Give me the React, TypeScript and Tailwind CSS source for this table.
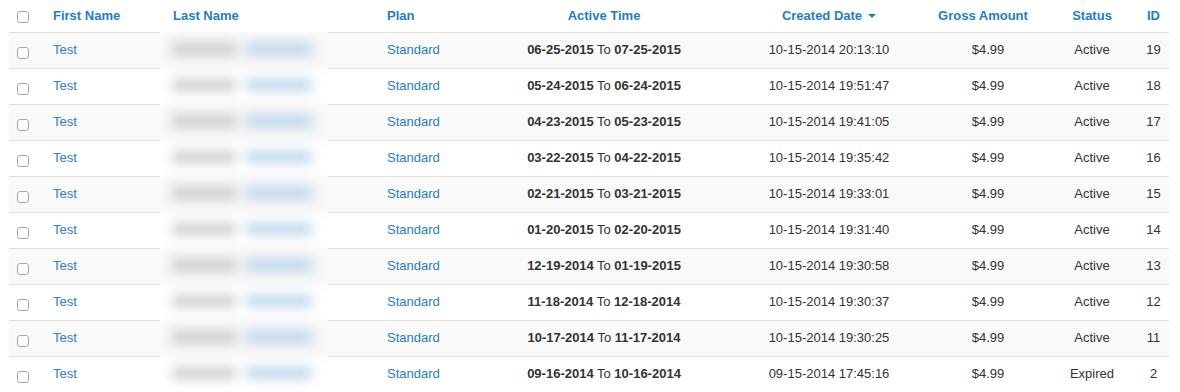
import React from 'react';

type Row = { from: string; to: string; created: string; status: string; id: number };

const rows: Row[] = [
  { from: '06-25-2015', to: '07-25-2015', created: '10-15-2014 20:13:10', status: 'Active', id: 19 },
  { from: '05-24-2015', to: '06-24-2015', created: '10-15-2014 19:51:47', status: 'Active', id: 18 },
  { from: '04-23-2015', to: '05-23-2015', created: '10-15-2014 19:41:05', status: 'Active', id: 17 },
  { from: '03-22-2015', to: '04-22-2015', created: '10-15-2014 19:35:42', status: 'Active', id: 16 },
  { from: '02-21-2015', to: '03-21-2015', created: '10-15-2014 19:33:01', status: 'Active', id: 15 },
  { from: '01-20-2015', to: '02-20-2015', created: '10-15-2014 19:31:40', status: 'Active', id: 14 },
  { from: '12-19-2014', to: '01-19-2015', created: '10-15-2014 19:30:58', status: 'Active', id: 13 },
  { from: '11-18-2014', to: '12-18-2014', created: '10-15-2014 19:30:37', status: 'Active', id: 12 },
  { from: '10-17-2014', to: '11-17-2014', created: '10-15-2014 19:30:25', status: 'Active', id: 11 },
  { from: '09-16-2014', to: '10-16-2014', created: '09-15-2014 17:45:16', status: 'Expired', id: 2 },
];

function Checkbox({ header }: { header?: boolean }) {
  return (
    <span
      className={
        'block w-[12px] h-[12px] rounded-[3px] border border-[#a8a8a8] bg-white ' +
        (header ? 'mt-[2px]' : 'mt-[6px]')
      }
    />
  );
}

export default function App() {
  return (
    <div
      className="w-[1180px] h-[392px] bg-white overflow-hidden text-[13px] text-[#333]"
      style={{ fontFamily: '"Liberation Sans", Arial, sans-serif' }}
    >
      <div className="relative ml-[9px] w-[1160px]">
        {/* header */}
        <div className="flex h-[32px] items-center font-bold text-[#1f7dc6]">
          <div className="w-[32px] pl-[8px]"><Checkbox header /></div>
          <div className="w-[124px] pl-[12px]">First Name</div>
          <div className="w-[214px] pl-[8px]">Last Name</div>
          <div className="w-[145px] pl-[8px]">Plan</div>
          <div className="w-[160px] text-center">Active Time</div>
          <div className="w-[250px] pl-[40px] flex justify-center">
            <span className="flex items-center gap-[6px]">
              Created Date
              <span className="inline-block w-0 h-0 border-x-[4px] border-x-transparent border-t-[4px] border-t-[#1f7dc6] mt-[-1px]" />
            </span>
          </div>
          <div className="w-[126px] pr-[28px] text-center">Gross Amount</div>
          <div className="w-[64px] text-center">Status</div>
          <div className="w-[45px] pl-[14px] text-center">ID</div>
        </div>

        {/* body */}
        {rows.map((r, i) => (
          <div
            key={r.id}
            className={
              'flex h-[36px] items-center pb-[2px] border-t border-[#dddddd] ' +
              (i % 2 === 0 && i < 9 ? 'bg-[#f9f9f9]' : 'bg-white')
            }
          >
            <div className="w-[32px] pl-[8px]"><Checkbox /></div>
            <div className="w-[124px] pl-[12px] text-[#2a7ec6]">Test</div>
            <div className="w-[214px] pl-[8px]" />
            <div className="w-[145px] pl-[8px] text-[#2a7ec6]">Standard</div>
            <div className="w-[160px] text-center whitespace-nowrap">
              <b>{r.from}</b> To <b>{r.to}</b>
            </div>
            <div className="w-[250px] pl-[40px] text-center">{r.created}</div>
            <div className="w-[126px] pr-[18px] text-center">$4.99</div>
            <div className="w-[64px] text-center">{r.status}</div>
            <div className="w-[45px] pl-[14px] text-center">{r.id}</div>
          </div>
        ))}

        {/* redacted last-name column */}
        <div className="absolute left-[151px] top-[32px] w-[168px] bottom-0 bg-white overflow-hidden">
          <div className="blur-[6px]">
            {rows.map((r, i) => (
              <div
                key={r.id}
                className={
                  'flex h-[36px] items-center gap-[10px] pl-[12px] pb-[2px] ' +
                  (i % 2 === 0 && i < 9 ? 'bg-[#f4f4f4]' : 'bg-white')
                }
              >
                <span className="block w-[64px] h-[12px] rounded bg-[#cdcdcd]" />
                <span className="block w-[66px] h-[12px] rounded bg-[#bcd6ec]" />
              </div>
            ))}
          </div>
        </div>
      </div>
    </div>
  );
}
